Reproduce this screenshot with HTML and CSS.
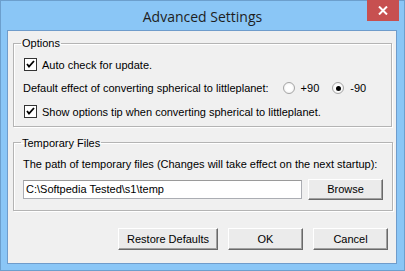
FILE: index.html
```html
<!DOCTYPE html>
<html lang="en">
  <head>
    <meta charset="UTF-8" />
    <title>Advanced Settings</title>
    <link rel="stylesheet" href="styles.css">
  </head>
  <body>
    <div class="window">
      <div class="titlebar">
        <span class="title">Advanced Settings</span>
        <span class="close">
          <svg width="10" height="9" viewBox="0 0 10 9">
            <path d="M1 0.5 L9 8.5 M9 0.5 L1 8.5" stroke="#fff" stroke-width="2" />
          </svg>
        </span>
      </div>
      <div class="client">
        <fieldset class="group options">
          <legend>Options</legend>
          <div class="row">
            <span class="check">
              <svg width="11" height="11" viewBox="0 0 11 11">
                <path d="M2 5 L4 7.5 L9 2" stroke="#000" stroke-width="1.8" fill="none" />
              </svg>
            </span>
            <span>Auto check for update.</span>
          </div>
          <div class="row">
            <span class="label">Default effect of converting spherical to littleplanet:</span>
            <span class="radio"></span>
            <span class="radio-text">+90</span>
            <span class="radio on"></span>
            <span class="radio-text">-90</span>
          </div>
          <div class="row">
            <span class="check">
              <svg width="11" height="11" viewBox="0 0 11 11">
                <path d="M2 5 L4 7.5 L9 2" stroke="#000" stroke-width="1.8" fill="none" />
              </svg>
            </span>
            <span>Show options tip when converting spherical to littleplanet.</span>
          </div>
        </fieldset>

        <fieldset class="group temp">
          <legend>Temporary Files</legend>
          <div class="row">The path of temporary files (Changes will take effect on the next startup):</div>
          <div class="path-row">
            <div class="textbox">C:\Softpedia Tested\s1\temp</div>
            <button class="btn browse">Browse</button>
          </div>
        </fieldset>

        <div class="actions">
          <button class="btn wide">Restore Defaults</button>
          <button class="btn">OK</button>
          <button class="btn">Cancel</button>
        </div>
      </div>
    </div>
  </body>
</html>
```

FILE: styles.css
```css
html,
body {
  margin: 0;
  padding: 0;
}

body {
  width: 405px;
  height: 271px;
  overflow: hidden;
  font-family: "Liberation Sans", Arial, sans-serif;
  font-size: 11px;
  color: #000;
}

.window {
  box-sizing: border-box;
  width: 405px;
  height: 271px;
  background: #8ac6f6;
  border: 1px solid #6c9fcd;
  display: flex;
  flex-direction: column;
}

.titlebar {
  height: 29px;
  position: relative;
  display: flex;
  justify-content: center;
  align-items: center;
}

.title {
  font-family: "Open Sans", sans-serif;
  font-size: 14px;
  color: #1e1e1e;
  margin-top: 1px;
}

.close {
  position: absolute;
  top: -1px;
  right: 5px;
  width: 32px;
  height: 21px;
  background: #c75050;
  display: flex;
  align-items: center;
  justify-content: center;
}

.client {
  flex: 1;
  margin: 0 7px 6px 6px;
  background: #f0f0f0;
  border: 1px solid #6f9ccb;
  display: flex;
  flex-direction: column;
  white-space: nowrap;
}

/* group boxes */
.group {
  margin: 6px 4px 0 5px;
  padding: 4px 9px 2px 9px;
  border: 1px solid #b4b4b4;
  box-shadow: inset 1px 1px 0 #fff, 1px 1px 0 #fff;
}

.group legend {
  padding: 0 1px;
  margin-left: -2px;
}

.row {
  display: flex;
  align-items: center;
  height: 22px;
}

.options .row {
  height: 23.5px;
}

.temp {
  margin-top: 10px;
  padding-bottom: 10px;
}

.check {
  box-sizing: border-box;
  width: 13px;
  height: 13px;
  margin-left: 1px;
  border: 1px solid #333;
  background: #fff;
  margin-right: 5px;
  display: flex;
  align-items: center;
  justify-content: center;
}

.label {
  margin-right: 14px;
}

.radio {
  box-sizing: border-box;
  width: 12px;
  height: 12px;
  border-radius: 50%;
  border: 1px solid #a5a5a5;
  background: radial-gradient(circle, #fff 40%, #e8e8e8 100%);
  margin-right: 6px;
  position: relative;
}

.radio.on::after {
  content: "";
  position: absolute;
  left: 2.5px;
  top: 2.5px;
  width: 5px;
  height: 5px;
  border-radius: 50%;
  background: #000;
}

.radio-text {
  margin-right: 13px;
}

.path-row {
  display: flex;
  align-items: center;
  margin-top: 4px;
  gap: 6px;
}

.textbox {
  box-sizing: border-box;
  width: 279px;
  height: 19px;
  background: #fff;
  border: 1px solid #abadb3;
  border-top-color: #9a9a9a;
  padding: 2px 2px;
  line-height: 13px;
}

/* buttons */
.btn {
  box-sizing: border-box;
  width: 75px;
  height: 22px;
  font-family: "Liberation Sans", Arial, sans-serif;
  font-size: 11px;
  color: #000;
  background: #ebebeb;
  border: 1px solid;
  border-color: #fff #696969 #696969 #fff;
  box-shadow: inset -1px -1px 0 #a0a0a0;
  padding: 0;
}

.browse {
  width: 75px;
  height: 21px;
}

.wide {
  width: 100px;
}

.actions {
  display: flex;
  justify-content: flex-end;
  gap: 10px;
  margin: 17px 8px 0 0;
}
```
